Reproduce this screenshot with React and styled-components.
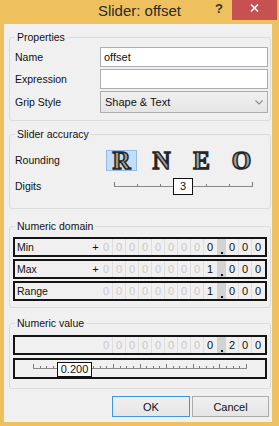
import React from 'react';
import styled, { createGlobalStyle } from 'styled-components';

const GlobalStyle = createGlobalStyle`
  html, body { margin: 0; padding: 0; }
  body {
    background: #efc15e;
    font-family: "Liberation Sans", Arial, sans-serif;
    font-size: 10.5px;
    color: #111;
  }
`;

const Window = styled.div`
  width: 279px;
  height: 426px;
  background: #efc15e;
  display: flex;
  flex-direction: column;
  overflow: hidden;
`;

const TitleBar = styled.div`
  height: 24px;
  flex: none;
  display: grid;
  grid-template-columns: 1fr auto 1fr;
  align-items: start;
`;

const Title = styled.div`
  grid-column: 2;
  font-size: 15px;
  line-height: 22px;
  color: #2a2a2a;
  white-space: nowrap;
`;

const Controls = styled.div`
  grid-column: 3;
  justify-self: end;
  display: flex;
  margin-right: 2px;
`;

const HelpButton = styled.div`
  width: 26px;
  height: 20px;
  display: flex;
  justify-content: center;
  align-items: flex-start;
  padding-top: 1px;
  box-sizing: border-box;
  font: bold 13px "Liberation Sans", Arial, sans-serif;
  color: #333;
`;

const CloseButton = styled.div`
  width: 45px;
  height: 20px;
  background: #c75050;
  display: flex;
  justify-content: center;
  align-items: flex-start;
  padding-top: 4px;
  box-sizing: border-box;
`;

const Client = styled.div`
  flex: 1;
  margin: 0 7px 4px 4px;
  background: #f0f0f0;
  display: flex;
  flex-direction: column;
  padding-left: 5px;
`;

const Group = styled.section`
  width: 262px;
  box-sizing: border-box;
  border: 1px solid #dcdcdc;
  border-radius: 3px;
  margin-top: ${(p) => p.$top}px;
  padding-bottom: ${(p) => p.$bottom}px;
  display: flex;
  flex-direction: column;
`;

const Legend = styled.div`
  align-self: flex-start;
  margin: -7px 0 0 5px;
  padding: 0 2px;
  background: #f0f0f0;
  line-height: 13px;
`;

const FormGrid = styled.div`
  display: grid;
  grid-template-columns: 85px 168px;
  grid-auto-rows: auto;
  row-gap: 2px;
  margin: ${(p) => p.$top}px 0 0 5px;
  align-items: center;
`;

const Label = styled.div`
  line-height: 13px;
`;

const TextBox = styled.div`
  height: 20px;
  box-sizing: border-box;
  border: 1px solid #abadb3;
  background: #fff;
  padding-left: 3px;
  display: flex;
  align-items: center;
  font-size: 11px;
`;

const Select = styled.div`
  height: 22px;
  box-sizing: border-box;
  border: 1px solid #acacac;
  background: linear-gradient(#f0f0f0, #e5e5e5);
  padding: 0 4px 0 4px;
  display: flex;
  align-items: center;
  justify-content: space-between;
  font-size: 11px;
`;

const AccGrid = styled.div`
  display: grid;
  grid-template-columns: 85px 168px;
  grid-template-rows: 21px 23px;
  row-gap: 4px;
  margin: 9px 0 0 5px;
  align-items: center;
`;

const Options = styled.div`
  display: flex;
  gap: 9px;
  padding-left: 6px;
  height: 21px;
`;

const Option = styled.div`
  width: 31px;
  height: 21px;
  box-sizing: border-box;
  display: flex;
  justify-content: center;
  border: 1px solid ${(p) => (p.$active ? '#8fbde8' : 'transparent')};
  background: ${(p) => (p.$active ? '#c6def5' : 'transparent')};
  font: bold 25px "Liberation Serif", "DejaVu Serif", serif;
  line-height: 19px;
  color: #a0a0a0;
  -webkit-text-stroke: 1.5px #262626;
`;

const SliderBox = styled.div`
  position: relative;
  width: ${(p) => p.$w}px;
  height: ${(p) => p.$h}px;
  margin-left: ${(p) => p.$left || 0}px;
`;

const Thumb = styled.div`
  position: absolute;
  box-sizing: border-box;
  border: 1px solid #111;
  background: #fff;
  display: flex;
  justify-content: center;
  align-items: center;
  font-size: 11px;
  line-height: 13px;
`;

const Rows = styled.div`
  display: flex;
  flex-direction: column;
  gap: ${(p) => p.$gap}px;
  margin: ${(p) => p.$top}px 0 0 3px;
`;

const DigitRow = styled.div`
  width: 254px;
  height: ${(p) => p.$h || 20}px;
  box-sizing: border-box;
  border: 2px solid #141414;
  display: flex;
  align-items: stretch;
  background: #f0f0f0;
`;

const RowLabel = styled.div`
  flex: 1;
  padding-left: 2px;
  display: flex;
  align-items: center;
`;

const Sign = styled.div`
  width: 9px;
  display: flex;
  align-items: center;
  justify-content: center;
  font-size: 11px;
`;

const Cell = styled.div`
  width: 13px;
  flex: none;
  box-sizing: border-box;
  display: flex;
  align-items: center;
  justify-content: center;
  font-size: 11px;
  color: ${(p) => (p.$dim ? '#c9c9c9' : '#111')};
  border-right: 1px solid ${(p) => (p.$last ? 'transparent' : '#dedede')};
`;

const Point = styled.div`
  width: 9px;
  flex: none;
  background: #d3d3d3;
  display: flex;
  flex-direction: column;
  justify-content: flex-end;
  align-items: center;
`;

const Dot = styled.div`
  width: 2px;
  height: 2px;
  background: #111;
  margin-bottom: 1px;
`;

const ButtonRow = styled.div`
  display: flex;
  justify-content: flex-end;
  gap: 2px;
  width: 262px;
  padding-right: 2px;
  box-sizing: border-box;
  margin-top: 7px;
`;

const Button = styled.div`
  width: ${(p) => p.$w}px;
  height: 21px;
  box-sizing: border-box;
  border: 1px solid ${(p) => (p.$default ? '#3d95e5' : '#acacac')};
  background: linear-gradient(#f0f0f0, #e5e5e5);
  display: flex;
  align-items: center;
  justify-content: center;
  font-size: 11px;
`;

function Ticks({ width, height, x0, x1, y, count, major, minorH, majorH }) {
  const lines = [];
  for (let i = 0; i <= count; i++) {
    const x = Math.round(x0 + ((x1 - x0) * i) / count) + 0.5;
    const isMajor = i % major === 0;
    const h = isMajor ? majorH : minorH;
    lines.push(<line key={i} x1={x} x2={x} y1={y - h} y2={y} stroke="#7a7a7a" strokeWidth="1" />);
  }
  return (
    <svg width={width} height={height} style={{ display: 'block' }}>
      <line x1={x0} x2={x1 + 1} y1={y + 0.5} y2={y + 0.5} stroke="#8a8a8a" strokeWidth="1" />
      {lines}
    </svg>
  );
}

function NumberCells({ intPart, decPart }) {
  const s = intPart.padStart(9, '0');
  const sig = s.search(/[1-9]/);
  const firstBlack = sig === -1 ? 8 : Math.min(sig, 8);
  return (
    <>
      {s.split('').map((d, i) => (
        <Cell key={'i' + i} $dim={i < firstBlack} $last={i === 8}>{d}</Cell>
      ))}
      <Point><Dot /></Point>
      {decPart.split('').map((d, i) => (
        <Cell key={'d' + i} $last={i === 2}>{d}</Cell>
      ))}
    </>
  );
}

const domain = [
  { label: 'Min', sign: '+', int: '0', dec: '000' },
  { label: 'Max', sign: '+', int: '1', dec: '000' },
  { label: 'Range', sign: '', int: '1', dec: '000' },
];

const letters = ['R', 'N', 'E', 'O'];

export default function App() {
  return (
    <>
      <GlobalStyle />
      <Window>
        <TitleBar>
          <Title>Slider: offset</Title>
          <Controls>
            <HelpButton>?</HelpButton>
            <CloseButton>
              <svg width="9" height="8" viewBox="0 0 9 8">
                <path d="M1 0.5 L8 7.5 M8 0.5 L1 7.5" stroke="#fff" strokeWidth="1.6" />
              </svg>
            </CloseButton>
          </Controls>
        </TitleBar>
        <Client>
          <Group $top={13} $bottom={7}>
            <Legend>Properties</Legend>
            <FormGrid $top={3}>
              <Label>Name</Label>
              <TextBox>offset</TextBox>
              <Label>Expression</Label>
              <TextBox />
              <Label>Grip Style</Label>
              <Select>
                <span>Shape &amp; Text</span>
                <svg width="8" height="5" viewBox="0 0 8 5">
                  <path d="M0.5 0.5 L4 4 L7.5 0.5" stroke="#8a8a8a" strokeWidth="1.1" fill="none" />
                </svg>
              </Select>
            </FormGrid>
          </Group>

          <Group $top={13} $bottom={10}>
            <Legend>Slider accuracy</Legend>
            <AccGrid>
              <Label>Rounding</Label>
              <Options>
                {letters.map((l, i) => (
                  <Option key={l} $active={i === 0}>{l}</Option>
                ))}
              </Options>
              <Label>Digits</Label>
              <SliderBox $w={150} $h={23} $left={13}>
                <Ticks width={150} height={23} x0={1} x1={139} y={11} count={6} major={6} minorH={2} majorH={4} />
                <Thumb style={{ left: 60, top: 3, width: 20, height: 17 }}>3</Thumb>
              </SliderBox>
            </AccGrid>
          </Group>

          <Group $top={17} $bottom={6}>
            <Legend>Numeric domain</Legend>
            <Rows $top={4} $gap={2}>
              {domain.map((r) => (
                <DigitRow key={r.label}>
                  <RowLabel>{r.label}</RowLabel>
                  <Sign>{r.sign}</Sign>
                  <NumberCells intPart={r.int} decPart={r.dec} />
                </DigitRow>
              ))}
            </Rows>
          </Group>

          <Group $top={15} $bottom={9}>
            <Legend>Numeric value</Legend>
            <Rows $top={5} $gap={3}>
              <DigitRow>
                <RowLabel />
                <Sign />
                <NumberCells intPart="0" decPart="200" />
              </DigitRow>
              <DigitRow $h={21}>
                <SliderBox $w={250} $h={17}>
                  <Ticks width={250} height={17} x0={18} x1={231} y={8} count={32} major={4} minorH={2} majorH={4} />
                  <Thumb style={{ left: 42, top: 2, width: 35, height: 15 }}>0.200</Thumb>
                </SliderBox>
              </DigitRow>
            </Rows>
          </Group>

          <ButtonRow>
            <Button $w={78} $default>OK</Button>
            <Button $w={77}>Cancel</Button>
          </ButtonRow>
        </Client>
      </Window>
    </>
  );
}
